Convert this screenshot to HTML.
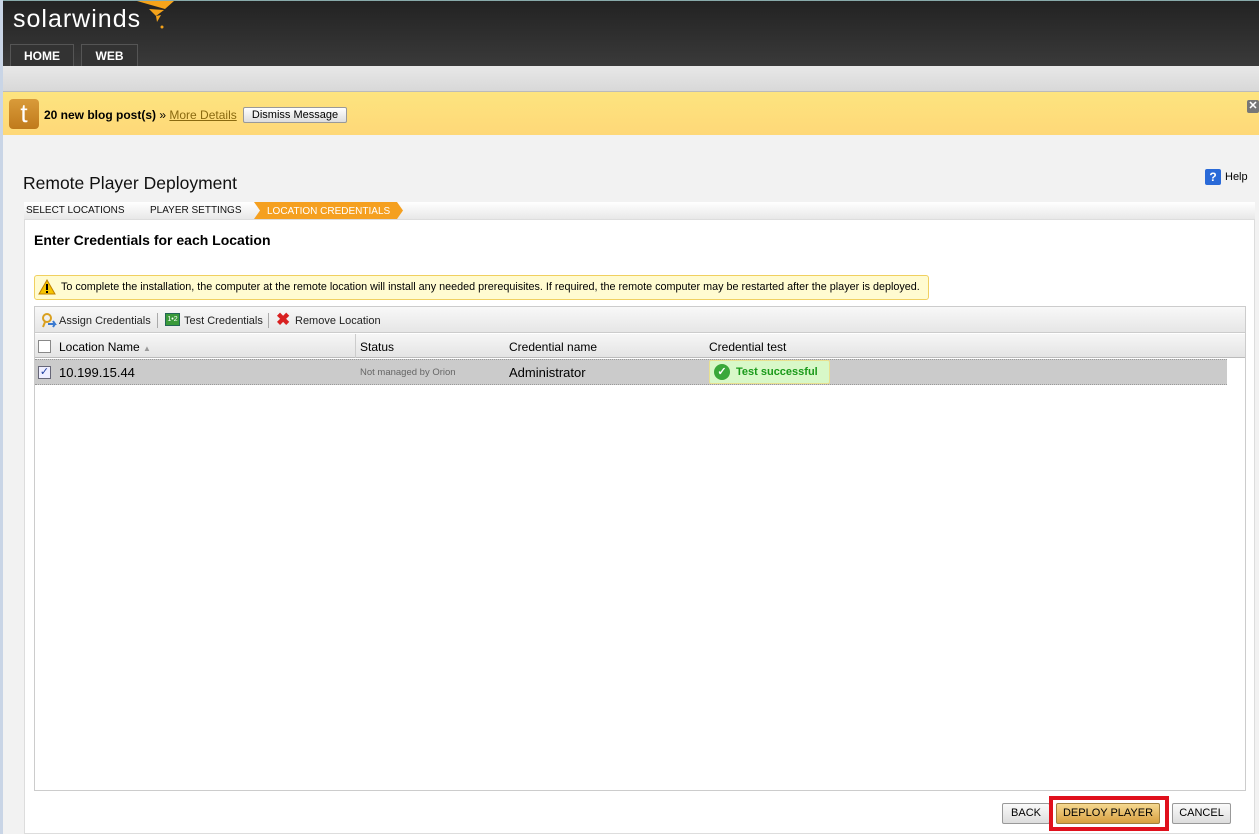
<!DOCTYPE html>
<html><head><style>
*{margin:0;padding:0;box-sizing:border-box}
body{width:1259px;height:834px;overflow:hidden;font-family:"Liberation Sans",Arial,sans-serif;background:#f2f2f2;position:relative}
.a{position:absolute}
</style></head><body>
<div class="a" style="left:0;top:0;width:3px;height:834px;background:#c9d5e6"></div>
<div class="a" style="left:3px;top:0;width:1256px;height:66px;background:linear-gradient(#222,#3a3a3a)"></div>
<div class="a" style="left:3px;top:0;width:1256px;height:1px;background:#8aa"></div>
<div class="a" style="left:13px;top:5px;color:#fff;font-size:25px;letter-spacing:1px">solarwinds</div>
<svg class="a" style="left:135px;top:0" width="42" height="32"><path d="M2 1 L39 1 L30 9 Z" fill="#f5a31a"/><path d="M14 9 L29 10 L21 16 Z" fill="#f5a31a"/><path d="M21 16 L26 15 L22 22 Z" fill="#f5a31a"/><circle cx="27" cy="27" r="1.5" fill="#f5a31a"/></svg>
<div class="a" style="left:10px;top:44px;width:64px;height:22px;background:#333;border:1px solid #555;border-bottom:0;color:#fff;font-weight:bold;font-size:12px;text-align:center;line-height:22px">HOME</div>
<div class="a" style="left:81px;top:44px;width:57px;height:22px;background:#333;border:1px solid #555;border-bottom:0;color:#fff;font-weight:bold;font-size:12px;text-align:center;line-height:22px">WEB</div>
<div class="a" style="left:3px;top:66px;width:1256px;height:26px;background:linear-gradient(#e8e8e8,#d8d8d8);border-bottom:1px solid #bbb"></div>
<div class="a" style="left:3px;top:92px;width:1256px;height:43px;background:linear-gradient(#fde47f,#fed878)"></div>
<div class="a" style="left:9px;top:99px;width:30px;height:30px;background:linear-gradient(#d99b3a,#c07a1c);border-radius:4px;color:#fff;font-size:26px;text-align:center;line-height:28px">t</div>
<div class="a" style="left:44px;top:108px;font-size:12px;font-weight:bold">20 new blog post(s) <span style="font-weight:normal">»</span> <span style="font-weight:normal;color:#8a6a10;text-decoration:underline">More Details</span></div>
<div class="a" style="left:243px;top:107px;width:104px;height:16px;border:1px solid #999;border-radius:2px;background:linear-gradient(#fff,#ddd);font-size:11px;text-align:center;line-height:14px">Dismiss Message</div>
<div class="a" style="left:1247px;top:100px;width:12px;height:13px;background:#777;color:#fff;font-size:11px;font-weight:bold;line-height:13px;text-align:center;border-radius:2px">✕</div>
<div class="a" style="left:23px;top:173px;font-size:17.5px;color:#111">Remote Player Deployment</div>
<div class="a" style="left:1205px;top:169px;width:16px;height:16px;background:#2a6ad8;color:#fff;font-size:12px;font-weight:bold;text-align:center;line-height:16px;border-radius:2px">?</div>
<div class="a" style="left:1225px;top:171px;font-size:11px">Help</div>
<div class="a" style="left:24px;top:202px;width:1231px;height:17px;background:linear-gradient(#fff,#e8e8e8)"></div>
<div class="a" style="left:26px;top:205px;font-size:10px;color:#111">SELECT LOCATIONS</div>
<div class="a" style="left:150px;top:205px;font-size:10px;color:#111">PLAYER SETTINGS</div>
<svg class="a" style="left:254px;top:202px" width="150" height="17"><path d="M0 0 H143 L149 8.5 L143 17 H0 L6 8.5 Z" fill="#f5a020"/></svg>
<div class="a" style="left:267px;top:206px;font-size:10px;color:#fff">LOCATION CREDENTIALS</div>
<div class="a" style="left:24px;top:219px;width:1231px;height:615px;background:#fff;border:1px solid #ddd"></div>
<div class="a" style="left:34px;top:232px;font-size:14px;font-weight:bold">Enter Credentials for each Location</div>
<div class="a" style="left:34px;top:275px;width:895px;height:25px;background:#fffbd0;border:1px solid #f0d060;border-radius:3px"></div>
<svg class="a" style="left:38px;top:279px" width="18" height="16"><path d="M9 1 L17 15 H1 Z" fill="#f5c400" stroke="#c08000"/><rect x="8" y="5" width="2" height="6" fill="#000"/><rect x="8" y="12" width="2" height="2" fill="#000"/></svg>
<div class="a" style="left:61px;top:281px;font-size:10.8px;white-space:nowrap">To complete the installation, the computer at the remote location will install any needed prerequisites. If required, the remote computer may be restarted after the player is deployed.</div>
<div class="a" style="left:34px;top:306px;width:1212px;height:485px;border:1px solid #ccc"></div>
<div class="a" style="left:35px;top:307px;width:1210px;height:26px;background:linear-gradient(#f8f8f8,#e6e6e6);border-bottom:1px solid #ccc"></div>
<svg class="a" style="left:40px;top:312px" width="17" height="17"><circle cx="7" cy="6" r="4" fill="none" stroke="#d9a020" stroke-width="2"/><path d="M5 10 L3 15" stroke="#d9a020" stroke-width="2"/><path d="M8 12 H15 L13 9 M15 12 L13 15" stroke="#3a7ad0" stroke-width="2" fill="none"/></svg>
<div class="a" style="left:59px;top:315px;font-size:11px;color:#222">Assign Credentials</div>
<div class="a" style="left:157px;top:313px;width:1px;height:15px;background:#aaa"></div>
<div class="a" style="left:165px;top:313px;width:15px;height:13px;background:#3a9a3a;border:1px solid #265;color:#fff;font-size:7px;text-align:center;line-height:11px">1•2</div>
<div class="a" style="left:184px;top:315px;font-size:11px;color:#222">Test Credentials</div>
<div class="a" style="left:268px;top:313px;width:1px;height:15px;background:#aaa"></div>
<div class="a" style="left:276px;top:311px;color:#d82020;font-size:17px;font-weight:bold;line-height:17px">✖</div>
<div class="a" style="left:295px;top:315px;font-size:11px;color:#222">Remove Location</div>
<div class="a" style="left:35px;top:334px;width:1210px;height:24px;background:linear-gradient(#f6f6f6,#e4e4e4);border-bottom:1px solid #bbb"></div>
<div class="a" style="left:38px;top:340px;width:13px;height:13px;border:1px solid #888;background:#fff"></div>
<div class="a" style="left:59px;top:340px;font-size:12px">Location Name <span style="color:#999;font-size:8px">▲</span></div>
<div class="a" style="left:355px;top:334px;width:1px;height:24px;background:#ccc"></div>
<div class="a" style="left:360px;top:340px;font-size:12px">Status</div>
<div class="a" style="left:509px;top:340px;font-size:12px">Credential name</div>
<div class="a" style="left:709px;top:340px;font-size:12px">Credential test</div>
<div class="a" style="left:35px;top:359px;width:1192px;height:26px;background:#cbcbcb;border-bottom:1px dotted #999;border-top:1px dotted #999"></div>
<div class="a" style="left:38px;top:366px;width:13px;height:13px;border:1px solid #667;background:#eef;color:#2040a0;font-size:11px;line-height:11px;text-align:center">✓</div>
<div class="a" style="left:59px;top:365px;font-size:13px">10.199.15.44</div>
<div class="a" style="left:360px;top:367px;font-size:9.5px;color:#666">Not managed by Orion</div>
<div class="a" style="left:509px;top:365px;font-size:13px">Administrator</div>
<div class="a" style="left:709px;top:360px;width:121px;height:24px;background:#d8f8c8;border:1px solid #e8e090;border-radius:2px"></div>
<div class="a" style="left:714px;top:364px;width:16px;height:16px;border-radius:50%;background:#3aa83a;color:#fff;font-size:11px;text-align:center;line-height:16px;font-weight:bold">✓</div>
<div class="a" style="left:736px;top:366px;font-size:11px;font-weight:bold;color:#1a9a1a">Test successful</div>
<div class="a" style="left:1002px;top:803px;width:48px;height:21px;border:1px solid #999;border-radius:2px;background:linear-gradient(#fafafa,#ddd);font-size:11px;text-align:center;line-height:19px">BACK</div>
<div class="a" style="left:1049px;top:796px;width:120px;height:35px;border:4px solid #e0101c"></div>
<div class="a" style="left:1056px;top:803px;width:104px;height:21px;border:1px solid #a08040;border-radius:2px;background:linear-gradient(#f5d890,#d8a040);font-size:11px;text-align:center;line-height:19px">DEPLOY PLAYER</div>
<div class="a" style="left:1172px;top:803px;width:59px;height:21px;border:1px solid #999;border-radius:2px;background:linear-gradient(#fafafa,#ddd);font-size:11px;text-align:center;line-height:19px">CANCEL</div>
</body></html>
